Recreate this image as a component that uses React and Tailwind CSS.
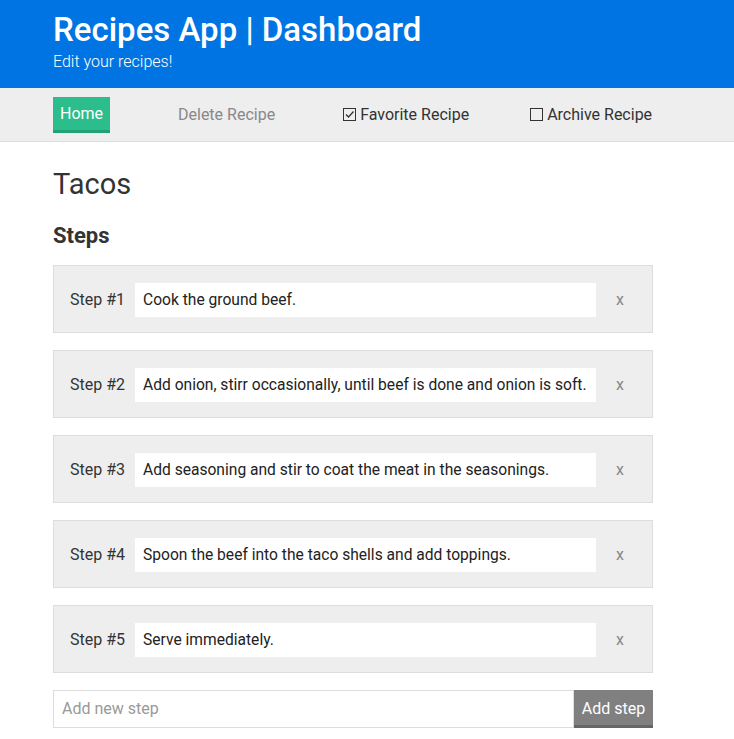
const steps = [
  'Cook the ground beef.',
  'Add onion, stirr occasionally, until beef is done and onion is soft.',
  'Add seasoning and stir to coat the meat in the seasonings.',
  'Spoon the beef into the taco shells and add toppings.',
  'Serve immediately.',
];

export default function App() {
  return (
    <div className="min-h-[739px] bg-white text-[#333] font-['Roboto',sans-serif]">
      {/* Header */}
      <header className="h-[88px] bg-[#0074e3] px-[53px] pt-[10px] text-white">
        <h1 className="text-[33px] font-medium leading-[40px]">Recipes App | Dashboard</h1>
        <p className="text-[16px] font-light leading-[24px]">Edit your recipes!</p>
      </header>

      {/* Nav */}
      <nav className="h-[54px] bg-[#eeeeee] border-b border-[#dddddd] px-[53px] flex items-center text-[16px]">
        <button className="h-[36px] w-[57px] pt-[2px] bg-[#2bbe8c] border-b-[3px] border-[#22a077] text-white">
          Home
        </button>
        <span className="ml-[68px] text-[#888]">Delete Recipe</span>
        <label className="ml-[68px] flex items-center gap-[4px] text-[#333]">
          <span className="w-[13px] h-[13px] border border-[#333] flex items-center justify-center">
            <svg width="11" height="11" viewBox="0 0 11 11">
              <path d="M2 5.5 L4.5 8 L9.5 2.5" fill="none" stroke="#333" strokeWidth="1.3" />
            </svg>
          </span>
          Favorite Recipe
        </label>
        <label className="ml-[61px] flex items-center gap-[4px] text-[#333]">
          <span className="w-[13px] h-[13px] border border-[#333]" />
          Archive Recipe
        </label>
      </nav>

      {/* Content */}
      <main className="px-[53px] w-[706px] pt-[24px]">
        <h2 className="text-[29px] leading-[36px]">Tacos</h2>
        <h3 className="mt-[20px] text-[22px] font-bold leading-[28px]">Steps</h3>
        <div className="mt-[15px] flex flex-col gap-[17px]">
          {steps.map((s, i) => (
            <div
              key={i}
              className="h-[68px] bg-[#eeeeee] border border-[#dddddd] pl-[16px] pt-[1px] flex items-center"
            >
              <span className="w-[65px] text-[16px]">Step #{i + 1}</span>
              <div className="w-[461px] h-[34px] bg-white pl-[8px] pt-[2px] flex items-center text-[15.6px] text-[#222] whitespace-nowrap">
                {s}
              </div>
              <span className="ml-[20px] text-[16px] text-[#888]">x</span>
            </div>
          ))}
        </div>
        <div className="mt-[17px] flex h-[38px]">
          <input
            className="flex-1 border border-[#dddddd] px-[8px] text-[16px] placeholder:text-[#999] outline-none"
            placeholder="Add new step"
          />
          <button className="w-[79px] pt-[3px] bg-[#808080] border-b-[3px] border-[#666] text-white text-[16px]">
            Add step
          </button>
        </div>
      </main>
    </div>
  );
}
